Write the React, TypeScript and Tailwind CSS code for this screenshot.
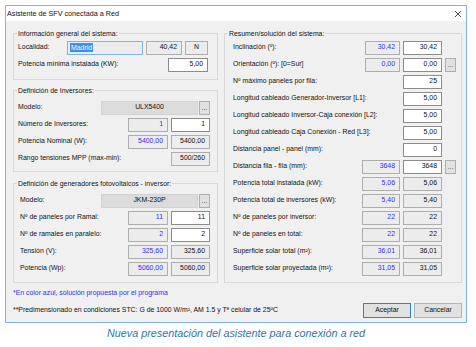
import React from "react";

const RO = "border border-[#adadad] bg-[#ececec]";
const WH = "border border-[#8c8c8c] bg-white";

function Box({
  className,
  children,
  blue,
  center,
}: {
  className: string;
  children?: React.ReactNode;
  blue?: boolean;
  center?: boolean;
}) {
  return (
    <div
      className={`h-[14px] shrink-0 flex items-center leading-none ${
        center ? "justify-center" : "justify-end pr-[4px]"
      } ${blue ? "text-[#2f2ff5]" : "text-[#101010]"} ${className}`}
    >
      {children}
    </div>
  );
}

function Dots({ className = "" }: { className?: string }) {
  return (
    <div
      className={`w-[11px] h-[14px] shrink-0 border border-[#adadad] bg-[#e1e1e1] flex items-end justify-center pb-[3px] text-[7px] leading-none text-[#444] ${className}`}
    >
      ...
    </div>
  );
}

function Spacer({ className }: { className: string }) {
  return <div className={`h-[14px] shrink-0 ${className}`} />;
}

function Row({ label, children }: { label: string; children?: React.ReactNode }) {
  return (
    <div className="flex items-center h-[17px]">
      <span className="flex-1 min-w-0 whitespace-nowrap leading-none">{label}</span>
      {children}
    </div>
  );
}

function Group({
  title,
  className,
  children,
}: {
  title: string;
  className: string;
  children: React.ReactNode;
}) {
  return (
    <div className={`relative border border-[#d8d8d8] ${className}`}>
      <span className="absolute top-[-5px] left-[3px] px-[1px] bg-[#f0f0f0] leading-[9px] whitespace-nowrap">
        {title}
      </span>
      {children}
    </div>
  );
}

function RightRow({
  label,
  blue,
  white,
  ro2,
  dots,
  narrow,
}: {
  label: string;
  blue?: string;
  white?: string;
  ro2?: string;
  dots?: boolean;
  narrow?: boolean;
}) {
  return (
    <Row label={label}>
      {blue !== undefined ? (
        <Box className={`${narrow ? "w-[35px]" : "w-[38px]"} ${RO}`} blue>
          {blue}
        </Box>
      ) : (
        <Spacer className="w-[38px]" />
      )}
      {white !== undefined ? (
        <Box className={`w-[39px] ml-[3px] ${WH}`}>{white}</Box>
      ) : (
        <Box className={`w-[39px] ml-[3px] ${RO}`}>{ro2}</Box>
      )}
      {dots ? <Dots className="ml-[3px]" /> : <Spacer className="w-[11px] ml-[3px]" />}
    </Row>
  );
}

export default function App() {
  return (
    <div className="w-[476px] h-[347px] bg-white pt-[5px] pl-[5px] font-['Liberation_Sans',Arial,sans-serif] text-[6.9px] text-[#101010]">
      <div className="w-[462px] h-[318px] border border-[#7eb4ea] flex flex-col">
        {/* Title bar */}
        <div className="h-[15px] bg-white flex items-center pl-[1px] pr-[4px] pt-[1px]">
          <span className="flex-1 leading-none text-[7.2px]">Asistente de SFV conectada a Red</span>
          <svg width="8" height="8" viewBox="0 0 8 8">
            <path d="M1 1 L7 7 M7 1 L1 7" stroke="#333" strokeWidth="0.9" fill="none" />
          </svg>
        </div>
        {/* Body */}
        <div className="flex-1 bg-[#f0f0f0] pt-[12px] pl-[7px] pr-[4px] flex flex-col">
          <div className="flex gap-[6px]">
            {/* Left column */}
            <div className="w-[205px] flex flex-col">
              <Group title="Información general del sistema:" className="h-[47px] pt-[5px] pl-[4px] pr-[9px]">
                <Row label="Localidad:">
                  <div className="w-[76px] h-[14px] shrink-0 border border-[#7eb4ea] bg-[#ececec] flex items-center pl-[2px]">
                    <span className="bg-[#3390ff] text-white px-[1px] leading-[9px]">Madrid</span>
                  </div>
                  <Box className={`w-[36px] ml-[3px] ${RO}`}>40,42</Box>
                  <Box className={`w-[23px] ml-[3px] ${RO}`} center>
                    N
                  </Box>
                </Row>
                <Row label="Potencia mínima instalada (KW):">
                  <Box className={`w-[40px] ${WH}`}>5,00</Box>
                </Row>
              </Group>

              <Group title="Definición de Inversores:" className="h-[82px] mt-[10px] pt-[8px] pl-[4px] pr-[7px]">
                <Row label="Modelo:">
                  <div className="w-[97px] h-[14px] shrink-0 bg-[#dcdcdc] border border-[#d2d2d2] flex items-center justify-center leading-none">
                    ULX5400
                  </div>
                  <Dots className="ml-[1px]" />
                </Row>
                <Row label="Número de Inversores:">
                  <Box className={`w-[40px] ${RO}`} blue>
                    1
                  </Box>
                  <Box className={`w-[39px] ml-[3px] ${WH}`}>1</Box>
                </Row>
                <Row label="Potencia Nominal (W):">
                  <Box className={`w-[40px] ${RO}`} blue>
                    5400,00
                  </Box>
                  <Box className={`w-[39px] ml-[3px] ${RO}`}>5400,00</Box>
                </Row>
                <Row label="Rango tensiones MPP (max-min):">
                  <Box className={`w-[39px] ${RO}`}>500/260</Box>
                </Row>
              </Group>

              <Group
                title="Definición de generadores fotovoltaicos - inversor:"
                className="h-[100px] mt-[11px] pt-[8px] pl-[6px] pr-[7px]"
              >
                <Row label="Modelo:">
                  <div className="w-[97px] h-[14px] shrink-0 bg-[#dcdcdc] border border-[#d2d2d2] flex items-center justify-center leading-none">
                    JKM-230P
                  </div>
                  <Dots className="ml-[1px]" />
                </Row>
                <Row label="Nº de paneles por Ramal:">
                  <Box className={`w-[40px] ${RO}`} blue>
                    11
                  </Box>
                  <Box className={`w-[39px] ml-[3px] ${WH}`}>11</Box>
                </Row>
                <Row label="Nº de ramales en paralelo:">
                  <Box className={`w-[40px] ${RO}`} blue>
                    2
                  </Box>
                  <Box className={`w-[39px] ml-[3px] ${WH}`}>2</Box>
                </Row>
                <Row label="Tensión (V):">
                  <Box className={`w-[40px] ${RO}`} blue>
                    325,60
                  </Box>
                  <Box className={`w-[39px] ml-[3px] ${RO}`}>325,60</Box>
                </Row>
                <Row label="Potencia (Wp):">
                  <Box className={`w-[40px] ${RO}`} blue>
                    5060,00
                  </Box>
                  <Box className={`w-[39px] ml-[3px] ${RO}`}>5060,00</Box>
                </Row>
              </Group>
            </div>

            {/* Right column */}
            <Group title="Resumen/solución del sistema:" className="w-[238px] h-[250px] pt-[5px] pl-[8px] pr-[5px]">
              <RightRow label="Inclinación (º):" blue="30,42" white="30,42" narrow />
              <RightRow label="Orientación (º): [0=Sur]" blue="0,00" white="0,00" dots narrow />
              <RightRow label="Nº máximo paneles por fila:" white="25" />
              <RightRow label="Longitud cableado Generador-Inversor [L1]:" white="5,00" />
              <RightRow label="Longitud cableado Inversor-Caja conexión [L2]:" white="5,00" />
              <RightRow label="Longitud cableado Caja Conexión - Red [L3]:" white="5,00" />
              <RightRow label="Distancia panel - panel (mm):" white="0" />
              <RightRow label="Distancia fila - fila (mm):" blue="3648" white="3648" dots />
              <RightRow label="Potencia total instalada (kW):" blue="5,06" ro2="5,06" />
              <RightRow label="Potencia total de inversores (kW):" blue="5,40" ro2="5,40" />
              <RightRow label="Nº de paneles por inversor:" blue="22" ro2="22" />
              <RightRow label="Nº de paneles en total:" blue="22" ro2="22" />
              <RightRow label="Superficie solar total (m²):" blue="36,01" ro2="36,01" />
              <RightRow label="Superficie solar proyectada (m²):" blue="31,05" ro2="31,05" />
            </Group>
          </div>

          <div className="mt-[5px] h-[10px] flex items-center leading-none text-[#2f2ff5]">
            *En color azul, solución propuesta por el programa
          </div>
          <div className="mt-[5px] h-[15px] flex items-center">
            <span className="flex-1 min-w-0 leading-none whitespace-nowrap">
              **Predimensionado en condiciones STC: G de 1000 W/m², AM 1.5 y Tª celular de 25ºC
            </span>
            <div className="w-[48px] h-[15px] shrink-0 border border-[#2d7fd9] bg-[#e1e1e1] flex items-center justify-center leading-none">
              Aceptar
            </div>
            <div className="w-[48px] h-[15px] shrink-0 ml-[3px] border border-[#b5b5b5] bg-[#e1e1e1] flex items-center justify-center leading-none">
              Cancelar
            </div>
          </div>
        </div>
      </div>
      <div className="w-[462px] mt-[4px] text-center italic text-[10.8px] leading-[13px] text-[#2e74b5]">
        Nueva presentación del asistente para conexión a red
      </div>
    </div>
  );
}
